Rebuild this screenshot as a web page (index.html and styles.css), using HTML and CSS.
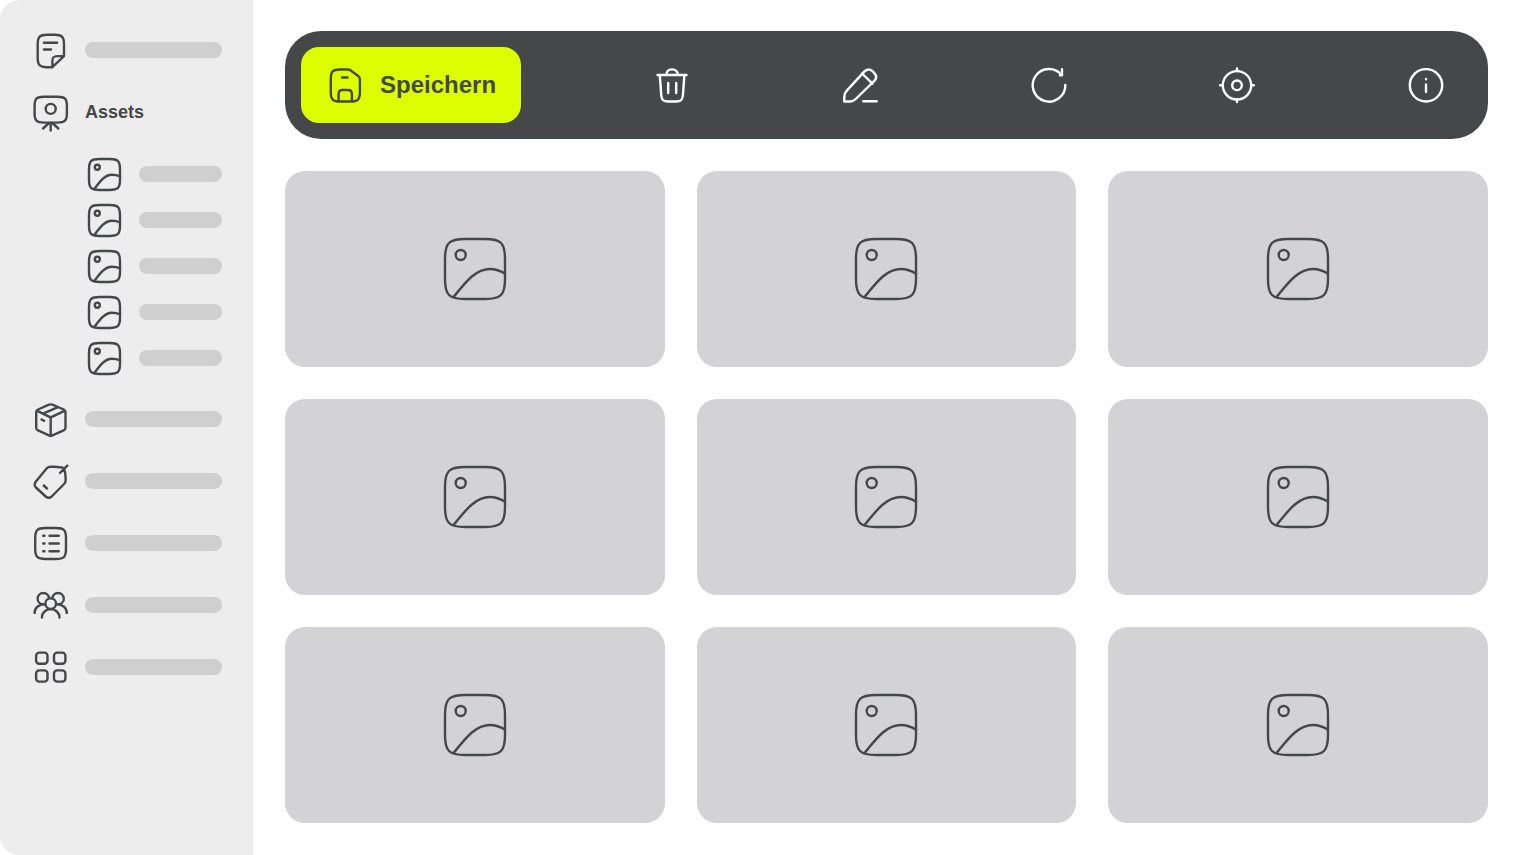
FILE: index.html
```html
<!DOCTYPE html>
<html lang="de">
<head>
<meta charset="utf-8">
<meta name="viewport" content="width=device-width, initial-scale=1">
<title>Assets</title>
<link rel="stylesheet" href="styles.css">
</head>
<body>
<svg class="sprite" aria-hidden="true">
  <symbol id="image-small" viewBox="0 0 37 37">
    <path d="M13.500 3h10c8.500 0 10.500 2 10.500 10.500v10c0 8.500-2 10.500-10.500 10.500h-10C5 34 3 32 3 23.500v-10C3 5 5 3 13.500 3z"/>
    <circle cx="11.300" cy="11.300" r="2.500"/>
    <path d="M8.300 33C13.500 26 18.500 18.700 26 18.700c3 0 5.500.500 8 1.600"/>
  </symbol>
  <symbol id="image-large" viewBox="0 0 64 64">
    <path d="M22 2h20c16 0 20 4 20 20v20c0 16-4 20-20 20H22C6 62 2 58 2 42V22C2 6 6 2 22 2z"/>
    <circle cx="17.700" cy="18" r="5"/>
    <path d="M11 59.500C22 46 32 32 47 32c5.500 0 10.500 1.800 15 4.700"/>
  </symbol>
</svg>
<div class="app">
  <nav class="sidebar" aria-label="Navigation">
    <div class="group">
      <a class="item" href="#" aria-label="Dokumente">
        <svg class="icon" viewBox="0 0 37 37"><path d="M20.400 35.200H15c-7.300 0-9.300-2.300-9.300-9.300V12.100c0-7.300 2.300-9.300 9.300-9.300h7.700c7.300 0 9.300 2.300 9.300 9.300v12L20.400 35.200V29c0-3.700 1.300-4.900 5-4.900H32M11.900 10.800h13.200M11.900 17.500H19"/></svg>
        <span class="bar"></span>
      </a>
      <a class="item" href="#" aria-current="page">
        <svg class="icon" viewBox="0 0 37 37"><path d="M12 2.700h13.400c7.600 0 9.500 2 9.500 9.300v7.300c0 7.300-2 9.300-9.500 9.300H12c-7.500 0-9.400-2-9.400-9.300V12C2.600 4.700 4.400 2.700 12 2.700z"/><circle cx="18.700" cy="14.900" r="5"/><path d="M18.700 29v7.500M17 29l-6 5.500M20.400 29l6 5.500"/></svg>
        <span class="label">Assets</span>
      </a>
      <div class="subgroup">
        <a class="item" href="#" aria-label="Asset 1"><svg class="icon"><use href="#image-small"/></svg><span class="bar"></span></a>
        <a class="item" href="#" aria-label="Asset 2"><svg class="icon"><use href="#image-small"/></svg><span class="bar"></span></a>
        <a class="item" href="#" aria-label="Asset 3"><svg class="icon"><use href="#image-small"/></svg><span class="bar"></span></a>
        <a class="item" href="#" aria-label="Asset 4"><svg class="icon"><use href="#image-small"/></svg><span class="bar"></span></a>
        <a class="item" href="#" aria-label="Asset 5"><svg class="icon"><use href="#image-small"/></svg><span class="bar"></span></a>
      </div>
    </div>
    <div class="group">
      <a class="item" href="#" aria-label="Produkte">
        <svg class="icon" viewBox="0 0 37 37"><path d="M17 3.700Q18.700 3 20.400 3.700L31.700 8.500q1.800.800 1.800 2.600v15.600q0 1.800-1.800 2.600l-11.300 5q-1.700.800-3.400 0l-11-5Q4.200 28.500 4.200 26.700V11.100q0-1.800 1.800-2.600zM4.700 9.700L17 15.700q1.700.800 3.400 0L33 9.700M18.700 16.300v18.300M11 12.700L26 6.200M9.500 18.500l2.700 1.300"/></svg>
        <span class="bar"></span>
      </a>
      <a class="item" href="#" aria-label="Etiketten">
        <svg class="icon" viewBox="0 0 37 37"><path d="M14.800 5.200Q16.500 3.700 18.500 3.700H22q6 .200 8.500 1Q32.300 5.300 32.700 7.500q.900 4 .9 7.500v2.500q0 2-1.500 3.500L19.700 33.500q-3 2.600-6 0L3.900 24.500q-2.400-2.800 0-6zM28 10L35.300 2.700M11.700 22.500l3.300 3"/></svg>
        <span class="bar"></span>
      </a>
      <a class="item" href="#" aria-label="Listen">
        <svg class="icon" viewBox="0 0 37 37"><path d="M13.500 3h10.300C32 3 34 5 34 13.200v10.600C34 32 32 34 23.800 34H13.500C5.200 34 3.200 32 3.200 23.800V13.200C3.200 5 5.200 3 13.500 3zM11.200 10.700h1.300M17.500 10.700h9.300M11.200 18.500h1.300M17.500 18.500h9.300M11.200 26.300h1.300M17.500 26.300h9.300"/></svg>
        <span class="bar"></span>
      </a>
      <a class="item" href="#" aria-label="Benutzer">
        <svg class="icon" viewBox="0 0 37 37"><circle cx="18.700" cy="16.700" r="5.300"/><path d="M9.900 30.500c0-4.800 4-8.400 8.800-8.400s8.800 3.600 8.800 8.400M10.700 17.300a5.700 5.700 0 1 1 6.300-6M26.700 17.300a5.700 5.700 0 1 0-6.300-6M2.600 25.900c0-5 4-8.600 10.200-8.600M34.800 25.900c0-5-4-8.600-10.200-8.600"/></svg>
        <span class="bar"></span>
      </a>
      <a class="item" href="#" aria-label="Module">
        <svg class="icon" viewBox="0 0 37 37"><rect x="4.100" y="3.600" width="11.400" height="11.200" rx="3.200"/><rect x="22" y="3.600" width="11.400" height="11.200" rx="3.200"/><rect x="4.100" y="21.400" width="11.400" height="11.200" rx="3.200"/><rect x="22" y="21.400" width="11.400" height="11.200" rx="3.200"/></svg>
        <span class="bar"></span>
      </a>
    </div>
  </nav>
  <main class="main">
    <div class="toolbar" role="toolbar">
      <button class="save" type="button">
        <svg class="tool-icon" viewBox="0 0 40 40"><path d="M15 4.500h7.500q1.800 0 3.200 1l7.500 5.500q1.700 1.300 1.700 3.500V27c0 7.500-2 9.500-9.600 9.500H15.400c-7.600 0-9.600-2-9.600-9.500V14c0-7.500 2-9.500 9.200-9.500zM13.600 36.300V29c0-3 1-4 4-4h5.300c3 0 4 1 4 4v7.300M17 12.500h5.500"/></svg>
        Speichern
      </button>
      <button class="tool" type="button" aria-label="Löschen">
        <svg class="tool-icon" viewBox="0 0 40 40"><path d="M5.500 10h29M14.500 10c0-4 2-5.600 5.500-5.600s5.500 1.600 6 5.600M7.800 10l1.400 19.500c.500 5.800 2 7 7.200 7h7.400c5.200 0 6.700-1.200 7.200-7L32.400 10M16.200 18v10M24.200 18v10"/></svg>
      </button>
      <button class="tool" type="button" aria-label="Bearbeiten">
        <svg class="tool-icon" viewBox="0 0 40 40"><path d="M4.300 36.500v-4.800q0-3.500 2.300-5.900L24.500 6.400q4-3.800 8-.200l1.800 1.900q3.900 4-.2 8L15.700 34q-2.500 2.500-5.600 2.500zM22 8.500l10.500 10.200M23.200 36.300h13.500"/></svg>
      </button>
      <button class="tool" type="button" aria-label="Aktualisieren">
        <svg class="tool-icon" viewBox="0 0 40 40"><path d="M36.300 20A16.300 16.300 0 1 1 32.800 10.200M33 4.300v6h-2"/></svg>
      </button>
      <button class="tool" type="button" aria-label="Fokus">
        <svg class="tool-icon" viewBox="0 0 40 40"><circle cx="20" cy="20.300" r="14.200"/><circle cx="20" cy="20.300" r="4.800"/><path d="M20 3.500v2.500M20 34.500v2.600M3.200 20.300h2.500M34.300 20.300h2.500"/></svg>
      </button>
      <button class="tool" type="button" aria-label="Info">
        <svg class="tool-icon" viewBox="0 0 40 40"><circle cx="20" cy="20.300" r="16.200"/><path d="M20 19.500v7.500M20 14v.200"/></svg>
      </button>
    </div>
    <div class="grid">
      <div class="card"><svg class="card-icon"><use href="#image-large"/></svg></div>
      <div class="card"><svg class="card-icon"><use href="#image-large"/></svg></div>
      <div class="card"><svg class="card-icon"><use href="#image-large"/></svg></div>
      <div class="card"><svg class="card-icon"><use href="#image-large"/></svg></div>
      <div class="card"><svg class="card-icon"><use href="#image-large"/></svg></div>
      <div class="card"><svg class="card-icon"><use href="#image-large"/></svg></div>
      <div class="card"><svg class="card-icon"><use href="#image-large"/></svg></div>
      <div class="card"><svg class="card-icon"><use href="#image-large"/></svg></div>
      <div class="card"><svg class="card-icon"><use href="#image-large"/></svg></div>
    </div>
  </main>
</div>
</body>
</html>
```
FILE: styles.css
```css
* {
  box-sizing: border-box;
}

body {
  margin: 0;
  background: #fff;
  color: #464749;
  font-family: "Liberation Sans", Arial, sans-serif;
}

.sprite {
  display: none;
}

.icon,
.tool-icon,
.card-icon {
  flex: none;
  fill: none;
  stroke: currentColor;
  stroke-width: 2.4;
  stroke-linecap: round;
  stroke-linejoin: round;
}

.app {
  display: flex;
  min-height: 100vh;
}

.sidebar {
  display: flex;
  flex: none;
  flex-direction: column;
  gap: 25px;
  width: 253px;
  padding: 32px 31px 32px 32px;
  border-radius: 20px 0 0 20px;
  background: #ededed;
}

.group {
  display: flex;
  flex-direction: column;
  gap: 26px;
}

.subgroup {
  display: flex;
  flex-direction: column;
  gap: 10px;
  padding-left: 54px;
}

.item {
  display: flex;
  align-items: center;
  gap: 16px;
  height: 36px;
  color: inherit;
  text-decoration: none;
}

.icon {
  width: 37px;
  height: 37px;
  overflow: visible;
}

.bar {
  flex: 1;
  height: 16px;
  border-radius: 8px;
  background: #cfcfcf;
}

.label {
  font-size: 18px;
  font-weight: 700;
  line-height: 24px;
}

.main {
  display: flex;
  flex: 1;
  flex-direction: column;
  gap: 32px;
  padding: 31px 32px 32px;
}

.toolbar {
  display: flex;
  align-items: center;
  justify-content: space-between;
  padding: 16px 24px 16px 16px;
  border-radius: 36px;
  background: #464749;
}

.save,
.tool {
  display: flex;
  align-items: center;
  justify-content: center;
  height: 76px;
  border: 0;
  cursor: pointer;
}

.save {
  gap: 15px;
  padding: 0 25px 0 24px;
  border-radius: 18px;
  background: #dcff00;
  color: #464749;
  font: 700 24px/32px "Liberation Sans", Arial, sans-serif;
}

.tool {
  width: 76px;
  padding: 0;
  background: none;
  color: #fff;
}

.tool-icon {
  width: 40px;
  height: 40px;
}

.grid {
  display: grid;
  flex: 1;
  grid-template-columns: repeat(3, 1fr);
  grid-auto-rows: 1fr;
  gap: 32px;
}

.card {
  display: flex;
  align-items: center;
  justify-content: center;
  border-radius: 20px;
  background: #d3d3d5;
}

.card-icon {
  width: 64px;
  height: 64px;
}
```
